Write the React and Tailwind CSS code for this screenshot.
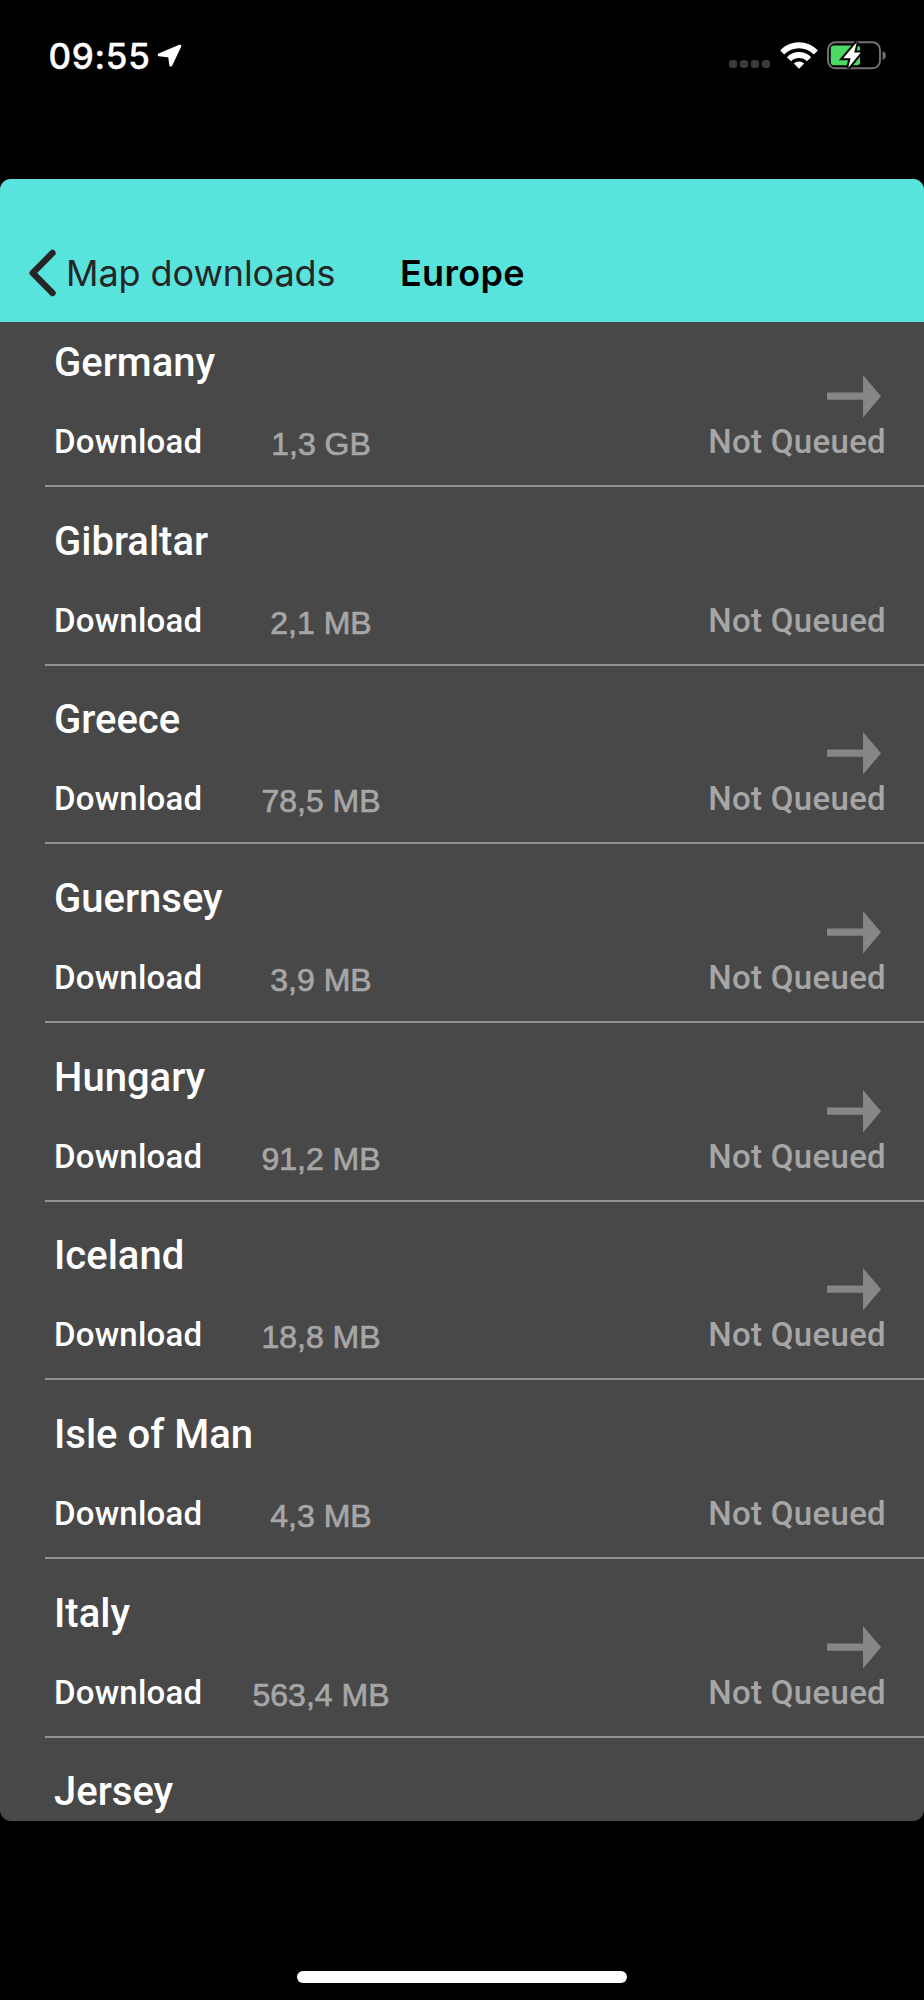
const rows = [
  { name: "Germany", size: "1,3 GB", arrow: true },
  { name: "Gibraltar", size: "2,1 MB", arrow: false },
  { name: "Greece", size: "78,5 MB", arrow: true },
  { name: "Guernsey", size: "3,9 MB", arrow: true },
  { name: "Hungary", size: "91,2 MB", arrow: true },
  { name: "Iceland", size: "18,8 MB", arrow: true },
  { name: "Isle of Man", size: "4,3 MB", arrow: false },
  { name: "Italy", size: "563,4 MB", arrow: true },
  { name: "Jersey", last: true },
];

function StatusBar() {
  return (
    <div className="flex h-[178.500px] items-start justify-between pt-[34px] pr-[37px] pl-[48.500px] text-white">
      <div className="flex h-[44px] items-center">
        <span className="w-[108.500px] text-[35px] leading-[44px] font-medium tracking-[0.7px] whitespace-nowrap [-webkit-text-stroke:0.4px]">09:55</span>
        <svg width="26" height="24" viewBox="0 0 26 24" fill="#fff" stroke="#fff" strokeWidth="3" strokeLinejoin="round">
          <path d="M22.8 2.2 L2.2 10.8 L12.6 12 L13.8 21 Z" />
        </svg>
      </div>
      <div className="flex h-[44px] items-center">
        <div className="mt-[16px] flex gap-[3px]">
          {[0, 1, 2, 3].map((i) => (
            <span key={i} className="size-[8px] rounded-[3px] bg-[#3a3a3a]" />
          ))}
        </div>
        <svg className="ml-[10px]" width="38" height="28" viewBox="0 0 38 28" fill="#fff">
          <path d="M0.2 8.4 C10.5 -2.4 27.500 -2.4 37.800 8.400 L33.800 12.500 C25.700 4.300 12.300 4.300 4.200 12.500 Z" />
          <path d="M6.900 15.200 C13.500 8.400 24.500 8.400 31.100 15.200 L27 19.300 C22.600 15 15.400 15 11 19.300 Z" />
          <path d="M13.800 21.500 C16.800 18.800 21.200 18.800 24.200 21.500 L19 26.800 Z" />
        </svg>
        <svg className="ml-[9px]" width="60" height="32" viewBox="0 0 60 32">
          <rect x="1" y="2.300" width="52" height="26" rx="7.500" fill="none" stroke="#707070" strokeWidth="2" />
          <path d="M55.500 11 C60 12.500 60 18.500 55.500 20 Z" fill="#707070" />
          <rect x="3.800" y="5.600" width="29.200" height="19.600" rx="3" fill="#4cd964" />
          <path d="M29.800 2.300 L16.200 18.200 H23.600 L21.200 28 L33.800 12.600 H27.200 Z" fill="#fff" stroke="#000" strokeWidth="4" paintOrder="stroke" />
        </svg>
      </div>
    </div>
  );
}

function Header() {
  return (
    <header className="flex h-[143.500px] items-end bg-[#59e3dd] pb-[21.500px] pl-[28px]">
      <div className="flex h-[56px] w-[372px] items-center">
        <svg width="30" height="54" viewBox="0 0 30 54" fill="none" stroke="#262626" strokeWidth="6.400" strokeLinecap="round" strokeLinejoin="round">
          <path d="M24.500 7 L4.700 27 L24.500 47" />
        </svg>
        <span className="ml-[8px] text-[36px] leading-[56px] tracking-[-0.08px] whitespace-nowrap text-[#262626]">Map downloads</span>
      </div>
      <h1 className="text-[36px] leading-[56px] font-semibold tracking-[0.3px] text-black">Europe</h1>
    </header>
  );
}

function Row({ name, size, arrow, last }) {
  return (
    <li className="ml-[45px] h-[178.660px] shrink-0">
      <div className="flex h-[177px] flex-col pr-[38px] pl-[9px] font-['Roboto',sans-serif] font-medium">
        <div className="flex h-[110px] shrink-0 justify-between">
          <h2 className="pt-[31px] text-[40px] leading-[48px] text-white">{name}</h2>
          {arrow && (
            <svg className="mt-[67px] mr-[5px]" width="54" height="44" viewBox="0 0 54 44" fill="#868686">
              <path d="M0 17.500 H36 V0 L54 21.300 L36 42.600 V24.800 H0 Z" />
            </svg>
          )}
        </div>
        {!last && (
          <div className="flex items-center text-[33px] leading-[44px]">
            <span className="w-[167px] tracking-[0.2px] text-white">Download</span>
            <span className="w-[200px] pt-[4px] text-center font-['Liberation_Sans',sans-serif] text-[32px] font-normal text-[#a6a6a6] [-webkit-text-stroke:0.7px]">{size}</span>
            <span className="ml-auto tracking-[0.3px] text-[#a6a6a6]">Not Queued</span>
          </div>
        )}
      </div>
      {!last && <div className="h-[2px] bg-[#939396]" />}
    </li>
  );
}

export default function App() {
  return (
    <div className="flex h-[2000px] w-[924px] flex-col overflow-hidden bg-black font-['Inter',sans-serif]">
      <StatusBar />
      <main className="h-[1642.500px] overflow-hidden rounded-[11px] bg-[#484848]">
        <Header />
        <ul className="-mt-[14px] flex flex-col">
          {rows.map((r) => (
            <Row key={r.name} {...r} />
          ))}
        </ul>
      </main>
      <div className="mx-auto mt-[149.500px] h-[12px] w-[330px] rounded-full bg-white" />
    </div>
  );
}
